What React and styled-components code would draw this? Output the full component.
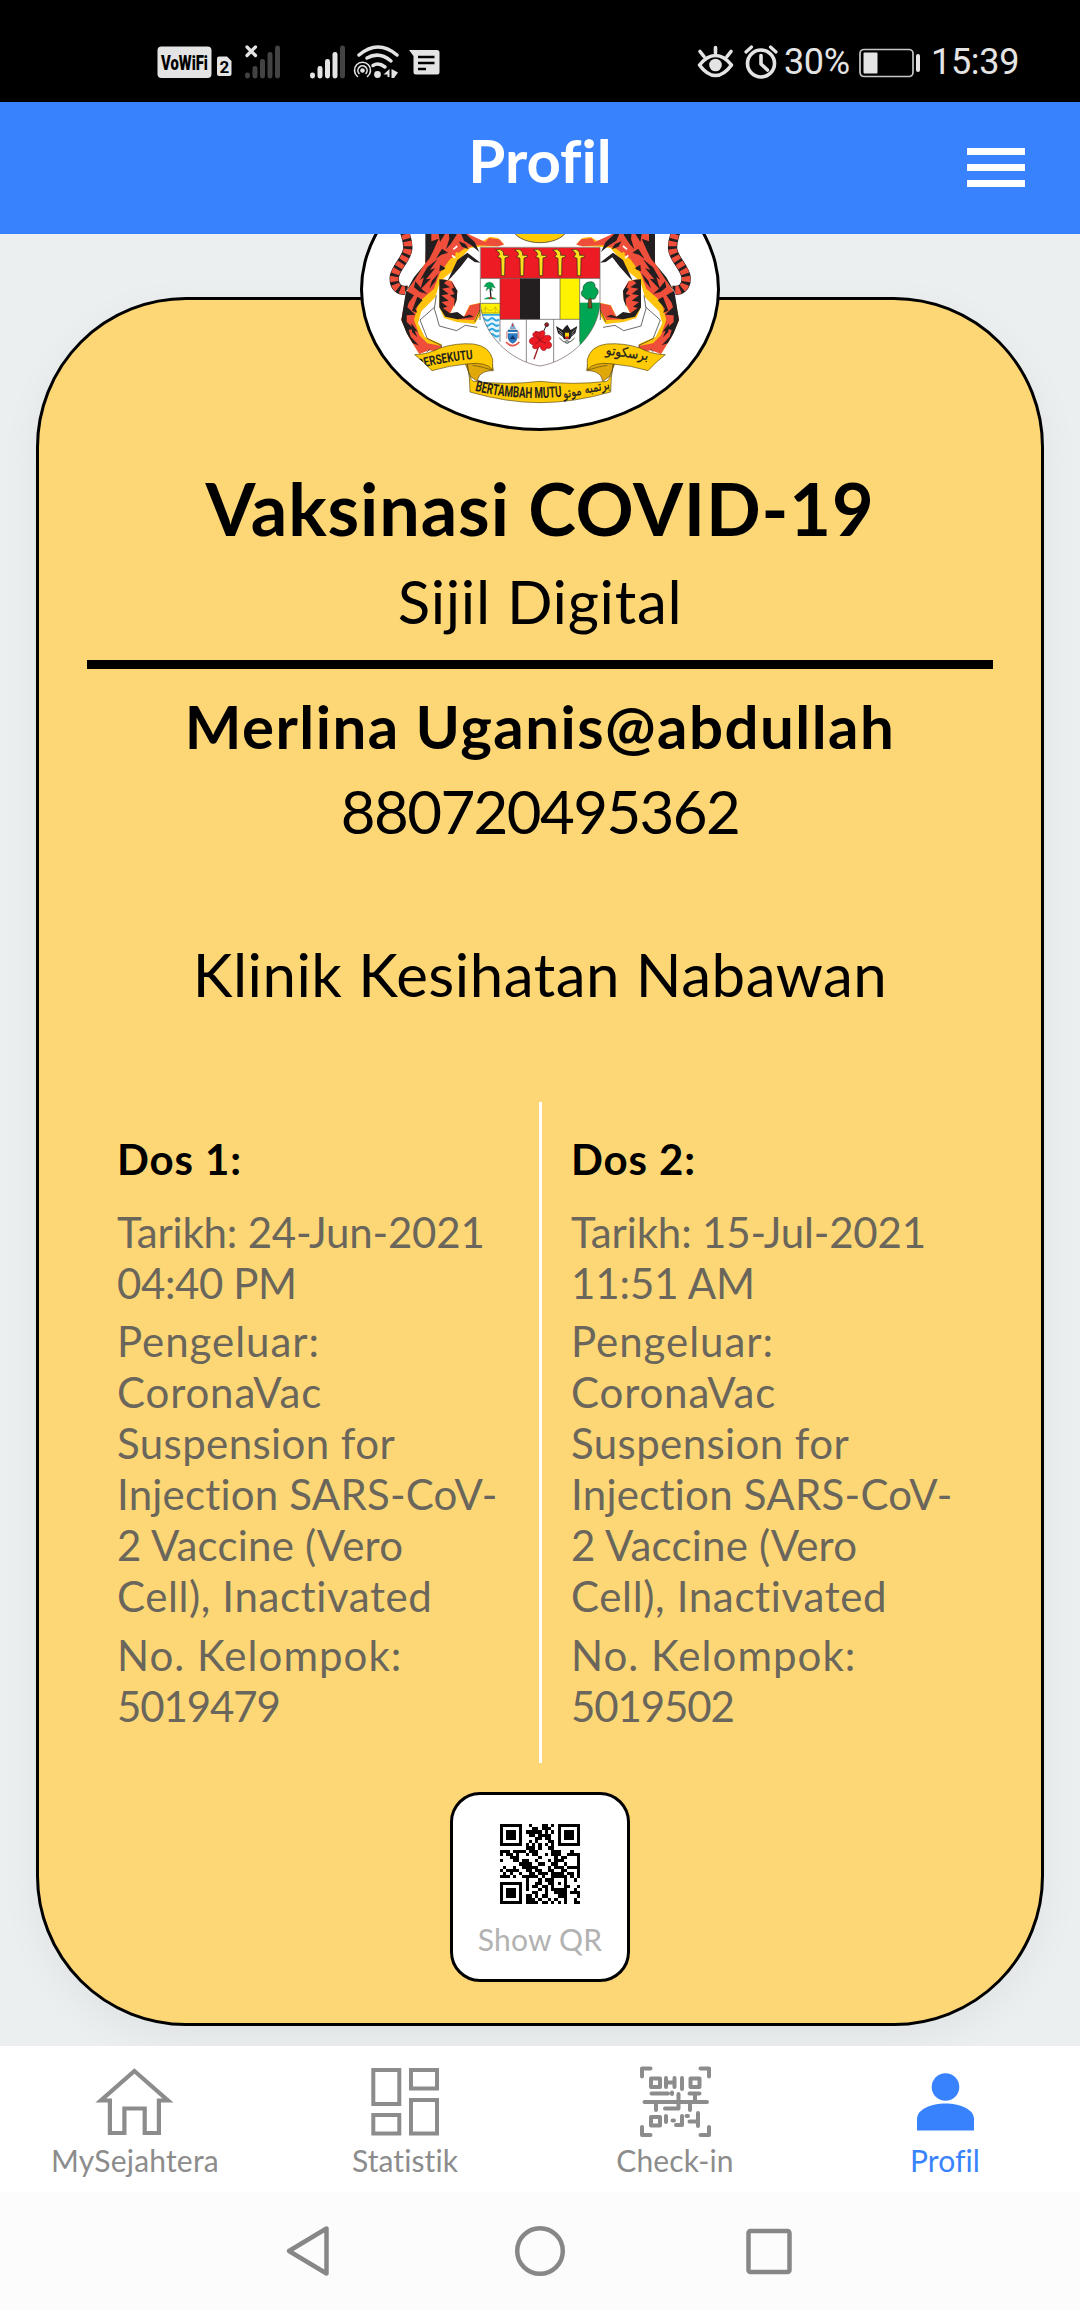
import React from "react";
import styled, { createGlobalStyle } from "styled-components";

const GlobalStyle = createGlobalStyle`
  * { box-sizing: border-box; }
  html, body { margin: 0; padding: 0; background: #ebeff0; }
  body {
    font-family: Lato, "Open Sans", sans-serif;
    font-variant-ligatures: none;
  }
`;

const Screen = styled.div`
  width: 1080px;
  height: 2310px;
  display: flex;
  flex-direction: column;
  overflow: hidden;
  background: #ebeff0;
`;

const StatusBar = styled.div`
  flex: none;
  height: 102px;
  background: #000;
  display: flex;
  align-items: center;
  padding: 22px 60px 0 157px;
`;

const Glyph = styled.svg`
  display: block;
  flex: none;
  width: ${(p) => p.$w}px;
  height: ${(p) => p.$h}px;
  margin-left: ${(p) => p.$gap || 0}px;
`;

const StatusSpacer = styled.div`
  flex: 1;
`;

const StatusText = styled.span`
  width: ${(p) => p.$w}px;
  margin-left: ${(p) => p.$gap}px;
  font: 400 36px/40px Roboto, sans-serif;
  letter-spacing: ${(p) => p.$ls || 0}px;
  color: #e4e4e4;
  white-space: nowrap;
`;

const Header = styled.header`
  flex: none;
  height: 132px;
  background: #3982fe;
  display: grid;
  grid-template-columns: 1fr auto 1fr;
  position: relative;
  z-index: 2;
`;

const HeaderTitle = styled.h1`
  grid-column: 2;
  margin: 0;
  padding-top: 22px;
  font-size: 60px;
  line-height: 72px;
  font-weight: 700;
  letter-spacing: 0;
  color: #fff;
`;

const MenuButton = styled.button`
  justify-self: end;
  margin: 46px 55px 0 0;
  padding: 0;
  width: 58px;
  height: 39px;
  border: 0;
  background: none;
  display: flex;
  flex-direction: column;
  justify-content: space-between;
`;

const MenuLine = styled.span`
  height: 7px;
  background: #fff;
`;

const Content = styled.main`
  flex: none;
  height: 1812px;
  overflow: hidden;
  padding: 63px 36px 0;
`;

const Card = styled.section`
  position: relative;
  height: 1729px;
  border: 3px solid #000;
  border-radius: 150px;
  background: #fdd775;
  box-shadow: 0 12px 40px rgba(0, 0, 0, 0.05);
  padding: 164px 48px 0;
  display: flex;
  flex-direction: column;
  align-items: center;
`;

const Seal = styled.div`
  position: absolute;
  top: -152px;
  left: 321px;
  width: 360px;
  height: 283px;
  border: 3px solid #000;
  border-radius: 50%;
  background: #fff;
  overflow: hidden;
`;

const SealArt = styled.svg`
  display: block;
  width: 354px;
  height: 277px;
`;

const CertTitle = styled.h2`
  margin: 0;
  font-size: 72px;
  line-height: 88px;
  font-weight: 700;
  letter-spacing: ${(p) => p.$ls}px;
  white-space: nowrap;
  color: #000;
`;

const CertLine = styled.p`
  margin: ${(p) => p.$top}px 0 0;
  font-size: 60px;
  line-height: 72px;
  font-weight: ${(p) => (p.$bold ? 700 : 400)};
  letter-spacing: ${(p) => p.$ls}px;
  white-space: nowrap;
  color: #000;
`;

const Rule = styled.hr`
  flex: none;
  width: 100%;
  height: 9px;
  margin: 23px 0 0;
  border: 0;
  background: #000;
`;

const Doses = styled.div`
  flex: none;
  margin-top: 92px;
  width: 100%;
  height: 661px;
  display: grid;
  grid-template-columns: 452px 3px 451px;
`;

const Divider = styled.div`
  background: #fff;
`;

const Dose = styled.div`
  padding: 31.5px 0 0 ${(p) => p.$inset}px;
  display: flex;
  flex-direction: column;
  gap: 7.5px;
  font-size: 42px;
  line-height: 51px;
  color: #6a665b;
  white-space: nowrap;
`;

const DoseTitle = styled.h3`
  margin: 0 0 14.5px;
  font-size: 42px;
  line-height: 51px;
  font-weight: 700;
  letter-spacing: 0.9px;
  color: #000;
`;

const DoseField = styled.div`
  display: flex;
  flex-direction: column;
`;

const DoseText = styled.span`
  letter-spacing: ${(p) => p.$ls}px;
`;

const QrButton = styled.button`
  flex: none;
  margin: 29px 0 0;
  padding: 29px 0 0;
  width: 180px;
  height: 190px;
  border: 3px solid #000;
  border-radius: 30px;
  background: #fff;
  display: flex;
  flex-direction: column;
  align-items: center;
  font-family: inherit;
`;

const QrLabel = styled.span`
  margin-top: 16px;
  font-size: 30px;
  line-height: 38px;
  letter-spacing: 0.2px;
  white-space: nowrap;
  color: #b2b2b2;
`;

const TabBar = styled.nav`
  flex: none;
  height: 146px;
  background: #fff;
  display: grid;
  grid-template-columns: repeat(4, 1fr);
`;

const Tab = styled.a`
  display: flex;
  flex-direction: column;
  align-items: center;
  padding-top: 16px;
  color: ${(p) => (p.$active ? "#3982fe" : "#8c8c8c")};
`;

const TabLabel = styled.span`
  font-size: 30px;
  line-height: 36px;
  letter-spacing: ${(p) => p.$ls}px;
  white-space: nowrap;
`;

const SystemNav = styled.div`
  flex: none;
  height: 118px;
  background: #fcfcfc;
  display: flex;
  justify-content: center;
  gap: 170px;
  padding: 31px 0 0;
`;

const QR_ROWS = [
  "1111111001000110101111111",
  "1000001000110111001000001",
  "1011101011111010101011101",
  "1011101001101111001011101",
  "1011101000011011001011101",
  "1000001001010001101000001",
  "1111111010101010101111111",
  "0000000011101001100000000",
  "1110111101110000111000100",
  "1011010010110010111001111",
  "0001110000001000010110001",
  "1000110110010001011100001",
  "0000001111001100110010001",
  "0100100111110001011101111",
  "1011110011011001100110001",
  "0101001001101110111101101",
  "1110100111110100111110101",
  "0000000010001011100010010",
  "1111111010011001101010000",
  "1000001010110110100011001",
  "1011101010001010111110010",
  "1011101000110010011110111",
  "1011101011010110001110001",
  "1000001011101001010010010",
  "1111111011110110101010011",
];

function QrCode() {
  return (
    <Glyph $w={80} $h={80} viewBox="0 0 25 25">
      <g shapeRendering="crispEdges">
        {QR_ROWS.map((row, y) =>
          [...row].map((c, x) =>
            c === "1" ? <rect key={`${x}-${y}`} x={x} y={y} width="1" height="1" /> : null
          )
        )}
      </g>
    </Glyph>
  );
}

function Tiger() {
  return (
    <g strokeLinejoin="round">
      <path d="M190 20 C196 50 206 62 203 88 C200 116 168 142 163 170 C160 200 178 216 206 210" fill="none" stroke="#231f20" strokeWidth="28" />
      <path d="M190 20 C196 50 206 62 203 88 C200 116 168 142 163 170 C160 200 178 216 206 210" fill="none" stroke="#ef4e3a" strokeWidth="25" strokeDasharray="15 8" />
      <path d="M262 20 L400 20 L424 74 L421 130 L385 112 L352 150 L322 180 L345 205 L352 240 L332 284 L372 290 L390 256 L420 247 L421 290 L410 318 L370 316 L350 330 L300 322 L289 280 L240 300 L262 355 L304 378 L302 400 L268 392 L236 404 L205 350 L184 300 L196 215 L256 130 Z" fill="#fff" />
      <path d="M262 20 L372 20 L396 60 L430 62 L450 50 L474 54 L492 72 L474 79 L422 80 L390 84 L356 122 L342 150 L300 184 L286 232 L244 274 L234 310 L254 350 L304 372 L302 398 L268 390 L238 402 L206 350 L184 300 L200 215 L256 130 Z" fill="#ffc20e" />
      <path d="M262 20 L342 20 L392 46 L436 66 L446 54 L478 58 L492 74 L474 79 L412 76 L372 86 L330 118 L300 158 L282 206 L236 246 L222 300 L238 346 L262 370 L304 378 L302 398 L268 390 L238 402 L206 350 L184 300 L200 215 L256 130 Z" fill="#ef4e3a" />
      <path d="M298 176 L334 182 L352 214 L350 240 L330 282 L372 290 L388 256 L420 248 L421 286 L404 312 L350 306 L312 294 L298 262 Z" fill="#ffc20e" />
      <path d="M304 178 L336 184 L352 214 L348 242 L328 284 L372 290 L390 256 L420 250 L420 268 L402 300 L352 298 L316 284 L302 256 Z" fill="#ef4e3a" />
      <path d="M289 226 L283 266 L289 286 L298 318 L350 332 L376 316 L412 322 M283 262 L240 300 L262 356 L304 376" fill="none" stroke="#231f20" strokeWidth="2" />
      <path d="M420 250 V300 M304 374 V400 M300 386 L284 392 M270 388 L260 396 M420 270 L404 306" fill="none" stroke="#231f20" strokeWidth="2" />
      <g fill="#231f20">
        <path d="M256 20 L274 20 L274 64 L296 56 L280 92 L268 116 L222 172 L196 218 L224 180 L256 130 Z" />
        <path d="M198 212 L222 226 L206 248 L202 262 L226 284 L200 286 L200 306 L222 326 L206 330 L212 350 L236 376 L218 370 L200 340 L184 300 Z" />
        <path d="M292 20 L308 20 L316 40 L300 66 Z M324 20 L338 20 L350 44 L332 72 L318 88 L328 56 Z" />
        <path d="M354 20 L366 20 L380 44 L404 66 L418 96 L394 76 L372 62 Z M356 64 L376 72 L386 88 L366 80 Z" />
        <path d="M382 98 L421 128 L404 126 L384 112 L362 140 L334 172 L322 184 L338 150 L352 120 Z" />
        <path d="M306 86 L324 98 L304 104 L288 116 Z M292 118 L270 150 L286 144 L258 178 L272 176 L240 210 L252 172 L240 180 L262 142 Z" />
        <path d="M300 134 L320 146 L298 154 Z M296 160 L286 184 L268 206 L276 182 Z" />
        <path d="M226 184 L246 208 L262 222 L240 216 L222 202 Z" />
        <path d="M232 230 L248 240 L226 266 L232 278 L216 272 Z" />
        <path d="M298 178 L322 180 L312 190 L330 202 L306 206 L326 222 L304 226 L326 242 L304 246 L322 260 L308 264 L330 280 L352 276 L372 290 L388 284 L402 290 L352 298 L316 290 L298 262 Z" />
        <path d="M334 184 L352 212 L350 240 L342 262 L344 236 L330 226 L344 222 L334 206 L342 204 Z" />
        <path d="M214 310 L234 336 L224 332 L232 352 L216 336 Z" />
      </g>
      <path d="M348 98 L360 112 M328 122 L342 136 M314 146 L326 156" stroke="#ffc20e" strokeWidth="8" />
      <path d="M340 88 L352 78 M336 106 L346 114" stroke="#fff" strokeWidth="5" />
    </g>
  );
}

function Keris({ x }) {
  return (
    <path
      d={`M${x - 20} 90 q12 -5 20 2 q5 6 4 14 l14 0 l0 5 l-10 3 l-1 53 l-10 0 l-1 -52 l-10 -4 l6 -8 q-1 -8 -12 -13 Z`}
      fill="#ffe01a"
      stroke="#231f20"
      strokeWidth="2"
    />
  );
}

function Emblem() {
  return (
    <SealArt viewBox="69 -207 1062 831">
      <defs>
        <clipPath id="shieldClip">
          <path d="M421 82 H780 V248 C776 340 690 424 600 438 C510 424 425 340 421 248 Z" />
        </clipPath>
        <clipPath id="leftRibbon">
          <path d="M224 404 L300 384 L460 372 L460 452 L380 432 L276 452 Z" />
        </clipPath>
        <path id="mottoArc" d="M404 512 Q 530 544 668 530" />
        <path id="unityArc" d="M236 446 Q 320 424 402 417" />
      </defs>
      <ellipse cx="600" cy="20" rx="84" ry="48" fill="#ffcb05" stroke="#231f20" strokeWidth="2" />
      <Tiger />
      <g transform="translate(1201 0) scale(-1 1)">
        <Tiger />
      </g>

      <g clipPath="url(#shieldClip)">
        <rect x="421" y="82" width="359" height="360" fill="#fff" />
        <rect x="421" y="82" width="359" height="93" fill="#ed1c24" />
        <rect x="480" y="175" width="60" height="123" fill="#ed1c24" />
        <rect x="540" y="175" width="60" height="123" fill="#231f20" />
        <rect x="660" y="175" width="59" height="123" fill="#fff200" />
        <rect x="719" y="248" width="61" height="190" fill="#00a651" />
        <rect x="421" y="250" width="59" height="33" fill="#fff200" />
        <rect x="421" y="284" width="59" height="154" fill="#e8f6fc" />
        <path d="M421 284 H480 M421 298 q7 -7 14 0 t14 0 t14 0 t14 0 M421 314 q7 -7 14 0 t14 0 t14 0 t14 0 M421 330 q7 -7 14 0 t14 0 t14 0 t14 0 M421 346 q7 -7 14 0 t14 0 t14 0 t14 0" fill="none" stroke="#2fa8e0" strokeWidth="6" />
        <path d="M421 278 H480 M436 262 V280 M466 262 V280 M424 276 Q436 268 436 260 Q450 284 466 260 Q468 272 480 276" fill="none" stroke="#c9a70c" strokeWidth="2" />
      </g>
      <path d="M421 82 H780 V248 C776 340 690 424 600 438 C510 424 425 340 421 248 Z" fill="none" stroke="#6b5a55" strokeWidth="2" />
      <path d="M421 175 H780 M480 175 V365 M719 175 V365 M480 298 H719 M559 298 V426 M641 298 V426 M660 175 V298 M421 250 H480" fill="none" stroke="#55504e" strokeWidth="2" />
      {[487, 544, 601, 658, 715].map((x) => (
        <Keris key={x} x={x} />
      ))}

      <path d="M450 200 L453 236" stroke="#231f20" strokeWidth="4" />
      <path d="M449 186 L458 190 L466 204 L454 200 L458 214 L448 204 L438 212 L442 200 L432 200 L438 190 Z" fill="#00a651" stroke="#1a5c34" strokeWidth="1" />
      <path d="M430 238 Q450 224 472 238 Z" fill="#00a651" />
      <path d="M446 232 h12 v4 h-12 Z" fill="#ed1c24" />

      <path d="M746 226 L753 226 L756 264 L744 264 Z" fill="#7a4a21" stroke="#231f20" strokeWidth="1.5" />
      <path d="M748 186 C762 182 768 196 764 202 C776 204 778 222 768 228 C770 238 756 240 752 234 C744 242 732 236 732 230 C722 230 722 212 730 210 C726 200 736 186 748 186 Z" fill="#00a651" stroke="#1a4a2a" strokeWidth="2" />

      <g>
        <path d="M504 330 H532 V352 Q530 366 518 370 Q506 366 504 352 Z" fill="#2b7ec4" stroke="#1c3f78" strokeWidth="1.5" />
        <path d="M504 338 H532" stroke="#fff" strokeWidth="4" />
        <path d="M508 358 L518 346 L528 358 Z" fill="#12366f" />
        <path d="M510 326 L518 308 L527 326 Z" fill="#7cb8e8" stroke="#445" strokeWidth="1" />
        <path d="M518 312 v8" stroke="#ed1c24" strokeWidth="3" />
        <path d="M498 366 Q518 388 538 366" fill="none" stroke="#e2574c" strokeWidth="5" />
        <path d="M500 334 v22 M536 334 v22" stroke="#e9a39c" strokeWidth="4" />
      </g>

      <g>
        <path d="M600 358 L620 314" stroke="#231f20" strokeWidth="3" />
        <circle cx="620" cy="314" r="6" fill="#a01c24" stroke="#231f20" strokeWidth="2" />
        <path d="M596 378 L582 418" stroke="#a01c24" strokeWidth="4" />
        <path d="M600 360 C582 330 580 334 598 336 C614 326 618 338 612 348 C632 340 640 356 626 364 C642 372 634 390 620 384 C614 400 600 388 600 378 C590 392 572 386 580 374 C564 374 564 352 582 352 C572 340 586 330 600 340 Z" fill="#ed1c24" stroke="#9a1520" strokeWidth="2" />
        <path d="M600 362 L612 350 M600 362 L618 370 M600 362 L586 372 M600 362 L586 348" stroke="#7d101a" strokeWidth="2" />
      </g>

      <g>
        <path d="M648 318 L668 330 L674 322 L682 314 L688 324 L692 330 L712 318 L706 340 L694 350 L690 358 L672 358 L668 350 L654 340 Z" fill="#231f20" />
        <path d="M654 328 L668 340 M706 328 L694 340 M658 338 L668 346 M702 338 L694 346" stroke="#fff" strokeWidth="1.5" />
        <path d="M675 338 h12 v12 h-12 Z" fill="#ffcb05" />
        <path d="M676 350 h10 v6 h-10 Z" fill="#ed1c24" />
        <path d="M658 354 Q681 382 704 354" fill="none" stroke="#55504e" strokeWidth="3" />
        <circle cx="681" cy="366" r="5" fill="#9aa" stroke="#231f20" strokeWidth="1" />
      </g>

      <g stroke="#5b4a12" strokeWidth="2">
        <path d="M376 432 C400 426 440 424 456 432 L460 452 C440 452 416 456 412 484 L392 470 Z" fill="#e0a80a" />
        <path d="M824 432 C800 426 760 424 744 432 L740 452 C760 452 784 456 788 484 L808 470 Z" fill="#e0a80a" />
        <path d="M224 404 Q262 404 300 384 Q350 368 400 372 Q448 378 458 418 L458 450 Q440 424 380 432 Q330 436 276 452 Q250 424 224 404 Z" fill="#ffcb05" />
        <path d="M976 404 Q938 404 900 384 Q850 368 800 372 Q752 378 742 418 L742 450 Q760 424 820 432 Q870 436 924 452 Q950 424 976 404 Z" fill="#ffcb05" />
        <path d="M382 432 Q386 476 400 484 Q500 496 600 484 Q700 496 800 484 Q814 476 820 432 Q812 470 812 516 Q700 548 600 548 Q500 548 390 516 Q390 470 382 432 Z" fill="#ffcb05" />
        <path d="M398 436 C426 440 440 446 456 450 M802 436 C774 440 760 446 744 450" fill="none" />
      </g>
      <g fill="#231f20" fontFamily="Roboto, sans-serif" fontWeight="700">
        <g clipPath="url(#leftRibbon)">
          <text fontSize="40">
            <textPath href="#unityArc" textLength="166" lengthAdjust="spacingAndGlyphs">BERSEKUTU</textPath>
          </text>
        </g>
        <text fontSize="46">
          <textPath href="#mottoArc" textLength="264" lengthAdjust="spacingAndGlyphs">BERTAMBAH MUTU</textPath>
        </text>
      </g>
      <g fill="#231f20" stroke="#231f20" strokeWidth="0.8" fontFamily="'DejaVu Sans', sans-serif">
        <text x="860" y="412" fontSize="40" textAnchor="middle" textLength="128" lengthAdjust="spacingAndGlyphs" transform="rotate(8 860 412)">برسکوتو</text>
        <text x="741" y="520" fontSize="40" textAnchor="middle" textLength="142" lengthAdjust="spacingAndGlyphs" transform="rotate(-12 741 520)">برتمبه موتو</text>
      </g>
    </SealArt>
  );
}

const bars = [
  [0, 27], [7.5, 20.5], [15, 13.5], [22.5, 6.5], [30, 0],
];

function Signal({ gap, lit, off }) {
  return (
    <Glyph $w={36} $h={34} $gap={gap} viewBox="0 0 36 34">
      {bars.map(([x, y], i) => (
        <rect key={x} x={x} y={y + 0.5} width="5" height={33 - y} rx="2.4" fill={i < lit ? "#e4e4e4" : "#434343"} />
      ))}
      {off && <path d="M2 2 L10.500 10.500 M10.500 2 L2 10.500" stroke="#e4e4e4" strokeWidth="3.200" strokeLinecap="round" />}
    </Glyph>
  );
}

function StatusIcons() {
  return (
    <>
      <Glyph $w={55} $h={34} viewBox="0 0 55 34">
        <rect x="0.500" y="1.500" width="54" height="31.500" rx="4" fill="#e4e4e4" />
        <g transform="translate(27.5 24.5) scale(0.74 1)">
          <text textAnchor="middle" fontFamily="Roboto, sans-serif" fontWeight="900" fontSize="20">VoWiFi</text>
        </g>
      </Glyph>
      <Glyph $w={15} $h={34} $gap={5} viewBox="0 0 15 34">
        <path d="M2 11.500 H10 L14.500 16 V29 Q14.500 31 12.500 31 H2 Q0 31 0 29 V13.500 Q0 11.500 2 11.500 Z" fill="#e4e4e4" />
        <text x="7.400" y="27.500" textAnchor="middle" fontFamily="Roboto, sans-serif" fontWeight="700" fontSize="17">2</text>
      </Glyph>
      <Signal gap={13} lit={0} off />
      <Signal gap={29} lit={4} />
      <Glyph $w={46} $h={36} $gap={7} viewBox="0 0 46 36">
        <g fill="none" stroke="#e4e4e4" strokeLinecap="round">
          <path d="M6 11 Q25 -5 44 11" strokeWidth="3.500" />
          <path d="M14 14 Q26 7 38 17" strokeWidth="3.500" />
          <path d="M20 21.500 Q25.500 18 32 23" strokeWidth="3.500" />
          <path d="M4.500 32.500 A8 8 0 1 1 14.500 32.500" strokeWidth="1.600" />
          <path d="M6 29.500 A4.600 4.600 0 1 1 13 29.500" strokeWidth="1.600" />
        </g>
        <circle cx="9.500" cy="26.500" r="2.300" fill="#e4e4e4" />
        <circle cx="24.500" cy="30.500" r="3.400" fill="#e4e4e4" />
        <path d="M36.500 25 V33 H34.500 V30.500 H30.500 Z M38.500 25 L45 28.500 L41 34 L38.500 34 Z" fill="#e4e4e4" />
      </Glyph>
      <Glyph $w={31} $h={34} $gap={10} viewBox="0 0 31 34">
        <path d="M0 5 H28 Q30.500 5 30.500 7.500 V27 Q30.500 29.500 28 29.500 H7 Q4.500 29.500 4.500 27 V11 Z" fill="#e4e4e4" />
        <path d="M9 12 H25.500 M9 18 H25.500 M9 24 H17" stroke="#000" strokeWidth="2.700" />
      </Glyph>
      <StatusSpacer />
      <Glyph $w={37} $h={34} viewBox="0 0 37 34">
        <g fill="none" stroke="#e4e4e4" strokeWidth="3.600" strokeLinecap="round">
          <path d="M2.500 20 Q10 10.500 18.500 10.500 Q27 10.500 34.500 20 Q27 30.500 18.500 30.500 Q10 30.500 2.500 20 Z" strokeLinejoin="round" />
          <path d="M18.500 2.500 V8 M3 6.500 L7 11.500 M34 6.500 L30 11.500" />
        </g>
        <circle cx="18.500" cy="20" r="6.300" fill="#e4e4e4" />
      </Glyph>
      <Glyph $w={34} $h={34} $gap={10} viewBox="0 0 34 34">
        <g fill="none" stroke="#e4e4e4" strokeWidth="3.600">
          <circle cx="17" cy="18.500" r="13.500" />
          <path d="M17 10.500 V19 L23.500 25" strokeLinecap="round" strokeLinejoin="round" />
          <path d="M2 7 L7.500 2 M32 7 L26.500 2" strokeLinecap="round" strokeWidth="3.200" />
        </g>
      </Glyph>
      <StatusText $w={67} $gap={6} $ls={-0.4}>30%</StatusText>
      <Glyph $w={62} $h={34} $gap={8} viewBox="0 0 62 34">
        <rect x="1" y="4.500" width="53" height="27" rx="4" fill="none" stroke="#c4c8c4" strokeWidth="1.700" />
        <rect x="4.500" y="7.500" width="14" height="21" rx="1" fill="#e4e4e4" />
        <rect x="57" y="9" width="4" height="18" rx="2" fill="#e4e4e4" />
      </Glyph>
      <StatusText $w={89} $gap={10} $ls={-0.3}>15:39</StatusText>
    </>
  );
}

const doses = [
  {
    title: "Dos 1:",
    fields: [
      [["Tarikh: 24-Jun-2021", -0.2], ["04:40 PM", -0.4]],
      [
        ["Pengeluar:", 0.95], ["CoronaVac", 0.85], ["Suspension for", 0.4],
        ["Injection SARS-CoV-", 0.2], ["2 Vaccine (Vero", 0.2], ["Cell), Inactivated", 0.6],
      ],
      [["No. Kelompok:", 1.05], ["5019479", -1.1]],
    ],
  },
  {
    title: "Dos 2:",
    fields: [
      [["Tarikh: 15-Jul-2021", -0.15], ["11:51 AM", -0.1]],
      [
        ["Pengeluar:", 0.95], ["CoronaVac", 0.85], ["Suspension for", 0.4],
        ["Injection SARS-CoV-", 0.25], ["2 Vaccine (Vero", 0.2], ["Cell), Inactivated", 0.65],
      ],
      [["No. Kelompok:", 1.05], ["5019502", -1.1]],
    ],
  },
];

function DoseColumn({ data, inset }) {
  return (
    <Dose $inset={inset}>
      <DoseTitle>{data.title}</DoseTitle>
      {data.fields.map((lines) => (
        <DoseField key={lines[0][0]}>
          {lines.map(([text, tracking]) => (
            <DoseText key={text} $ls={tracking}>{text}</DoseText>
          ))}
        </DoseField>
      ))}
    </Dose>
  );
}

function HomeIcon() {
  return (
    <Glyph $w={80} $h={80} viewBox="0.6 0 80 80">
      <path d="M40 9 L73.500 38.500 H64.500 V71 H50.300 V46.500 H30 V71 H15.500 V38.500 H6.500 Z" fill="none" stroke="currentColor" strokeWidth="4.200" />
    </Glyph>
  );
}

function StatsIcon() {
  return (
    <Glyph $w={80} $h={80} viewBox="0 0 80 80">
      <g fill="none" stroke="currentColor" strokeWidth="4">
        <rect x="8.300" y="8" width="26" height="34" />
        <rect x="46" y="8" width="26" height="18.500" />
        <rect x="8.300" y="53" width="26" height="18.500" />
        <rect x="46" y="38" width="26" height="33.500" />
      </g>
    </Glyph>
  );
}

function CheckInIcon() {
  return (
    <Glyph $w={80} $h={80} viewBox="0 0 80 80">
      <g fill="none" stroke="currentColor" strokeWidth="4" strokeLinecap="round" strokeLinejoin="round">
        <path d="M7 14.500 V6.500 H15.500 M65.500 6.500 H74 V14.500 M7 65 V73 H15.500 M65.500 73 H74 V65" />
        <rect x="16" y="16.500" width="9" height="8.500" />
        <rect x="55.500" y="16.500" width="9" height="8.500" />
        <rect x="16" y="55" width="9" height="8.500" />
        <path d="M31 16 V25 M39.500 16 V25 M31 20.500 H39.500 M47 16 V27 M16.500 31.500 H33 M37 30.500 V32 M43.500 32 V46.500 H30 M54.500 31.500 H64.500 M60 32 V39 M9.500 40 H72 M21 41 V48 M55 41 V48 M31 54 V60 M37.500 58.500 H39 M47 54 V63 H41 M51.500 54 H53 M63 51 V64 M63 59.500 H54.500" />
      </g>
    </Glyph>
  );
}

function ProfileIcon() {
  return (
    <Glyph $w={80} $h={80} viewBox="0 0 80 80">
      <circle cx="40.500" cy="25" r="13.800" fill="currentColor" />
      <path d="M12 68.500 V57 C12 47 27 41.500 40.500 41.500 C54 41.500 69 47 69 57 V68.500 Z" fill="currentColor" />
    </Glyph>
  );
}

export default function App() {
  return (
    <>
      <GlobalStyle />
      <Screen>
        <StatusBar>
          <StatusIcons />
        </StatusBar>
        <Header>
          <HeaderTitle>Profil</HeaderTitle>
          <MenuButton aria-label="Menu">
            <MenuLine />
            <MenuLine />
            <MenuLine />
          </MenuButton>
        </Header>
        <Content>
          <Card>
            <Seal>
              <Emblem />
            </Seal>
            <CertTitle $ls={0.87}>Vaksinasi COVID-19</CertTitle>
            <CertLine $top={13} $ls={0.7}>Sijil Digital</CertLine>
            <Rule />
            <CertLine $top={21} $bold $ls={1.45}>Merlina Uganis@abdullah</CertLine>
            <CertLine $top={13} $ls={-1.6}>880720495362</CertLine>
            <CertLine $top={91} $ls={0.5}>Klinik Kesihatan Nabawan</CertLine>
            <Doses>
              <DoseColumn data={doses[0]} inset={30} />
              <Divider />
              <DoseColumn data={doses[1]} inset={29} />
            </Doses>
            <QrButton>
              <QrCode />
              <QrLabel>Show QR</QrLabel>
            </QrButton>
          </Card>
        </Content>
        <TabBar>
          <Tab>
            <HomeIcon />
            <TabLabel $ls={0.2}>MySejahtera</TabLabel>
          </Tab>
          <Tab>
            <StatsIcon />
            <TabLabel $ls={0.1}>Statistik</TabLabel>
          </Tab>
          <Tab>
            <CheckInIcon />
            <TabLabel $ls={0.1}>Check-in</TabLabel>
          </Tab>
          <Tab $active>
            <ProfileIcon />
            <TabLabel $ls={0.1}>Profil</TabLabel>
          </Tab>
        </TabBar>
        <SystemNav>
          <Glyph $w={60} $h={56} viewBox="0 0 60 56">
            <path d="M44.500 5.500 V50.500 L7 28 Z" fill="none" stroke="#878787" strokeWidth="4.500" strokeLinejoin="round" />
          </Glyph>
          <Glyph $w={56} $h={56} viewBox="0 0 56 56">
            <circle cx="28" cy="28" r="22.800" fill="none" stroke="#878787" strokeWidth="4.500" />
          </Glyph>
          <Glyph $w={60} $h={56} viewBox="0 0 60 56">
            <rect x="10.500" y="8" width="41" height="41" rx="2" fill="none" stroke="#878787" strokeWidth="4.500" />
          </Glyph>
        </SystemNav>
      </Screen>
    </>
  );
}
